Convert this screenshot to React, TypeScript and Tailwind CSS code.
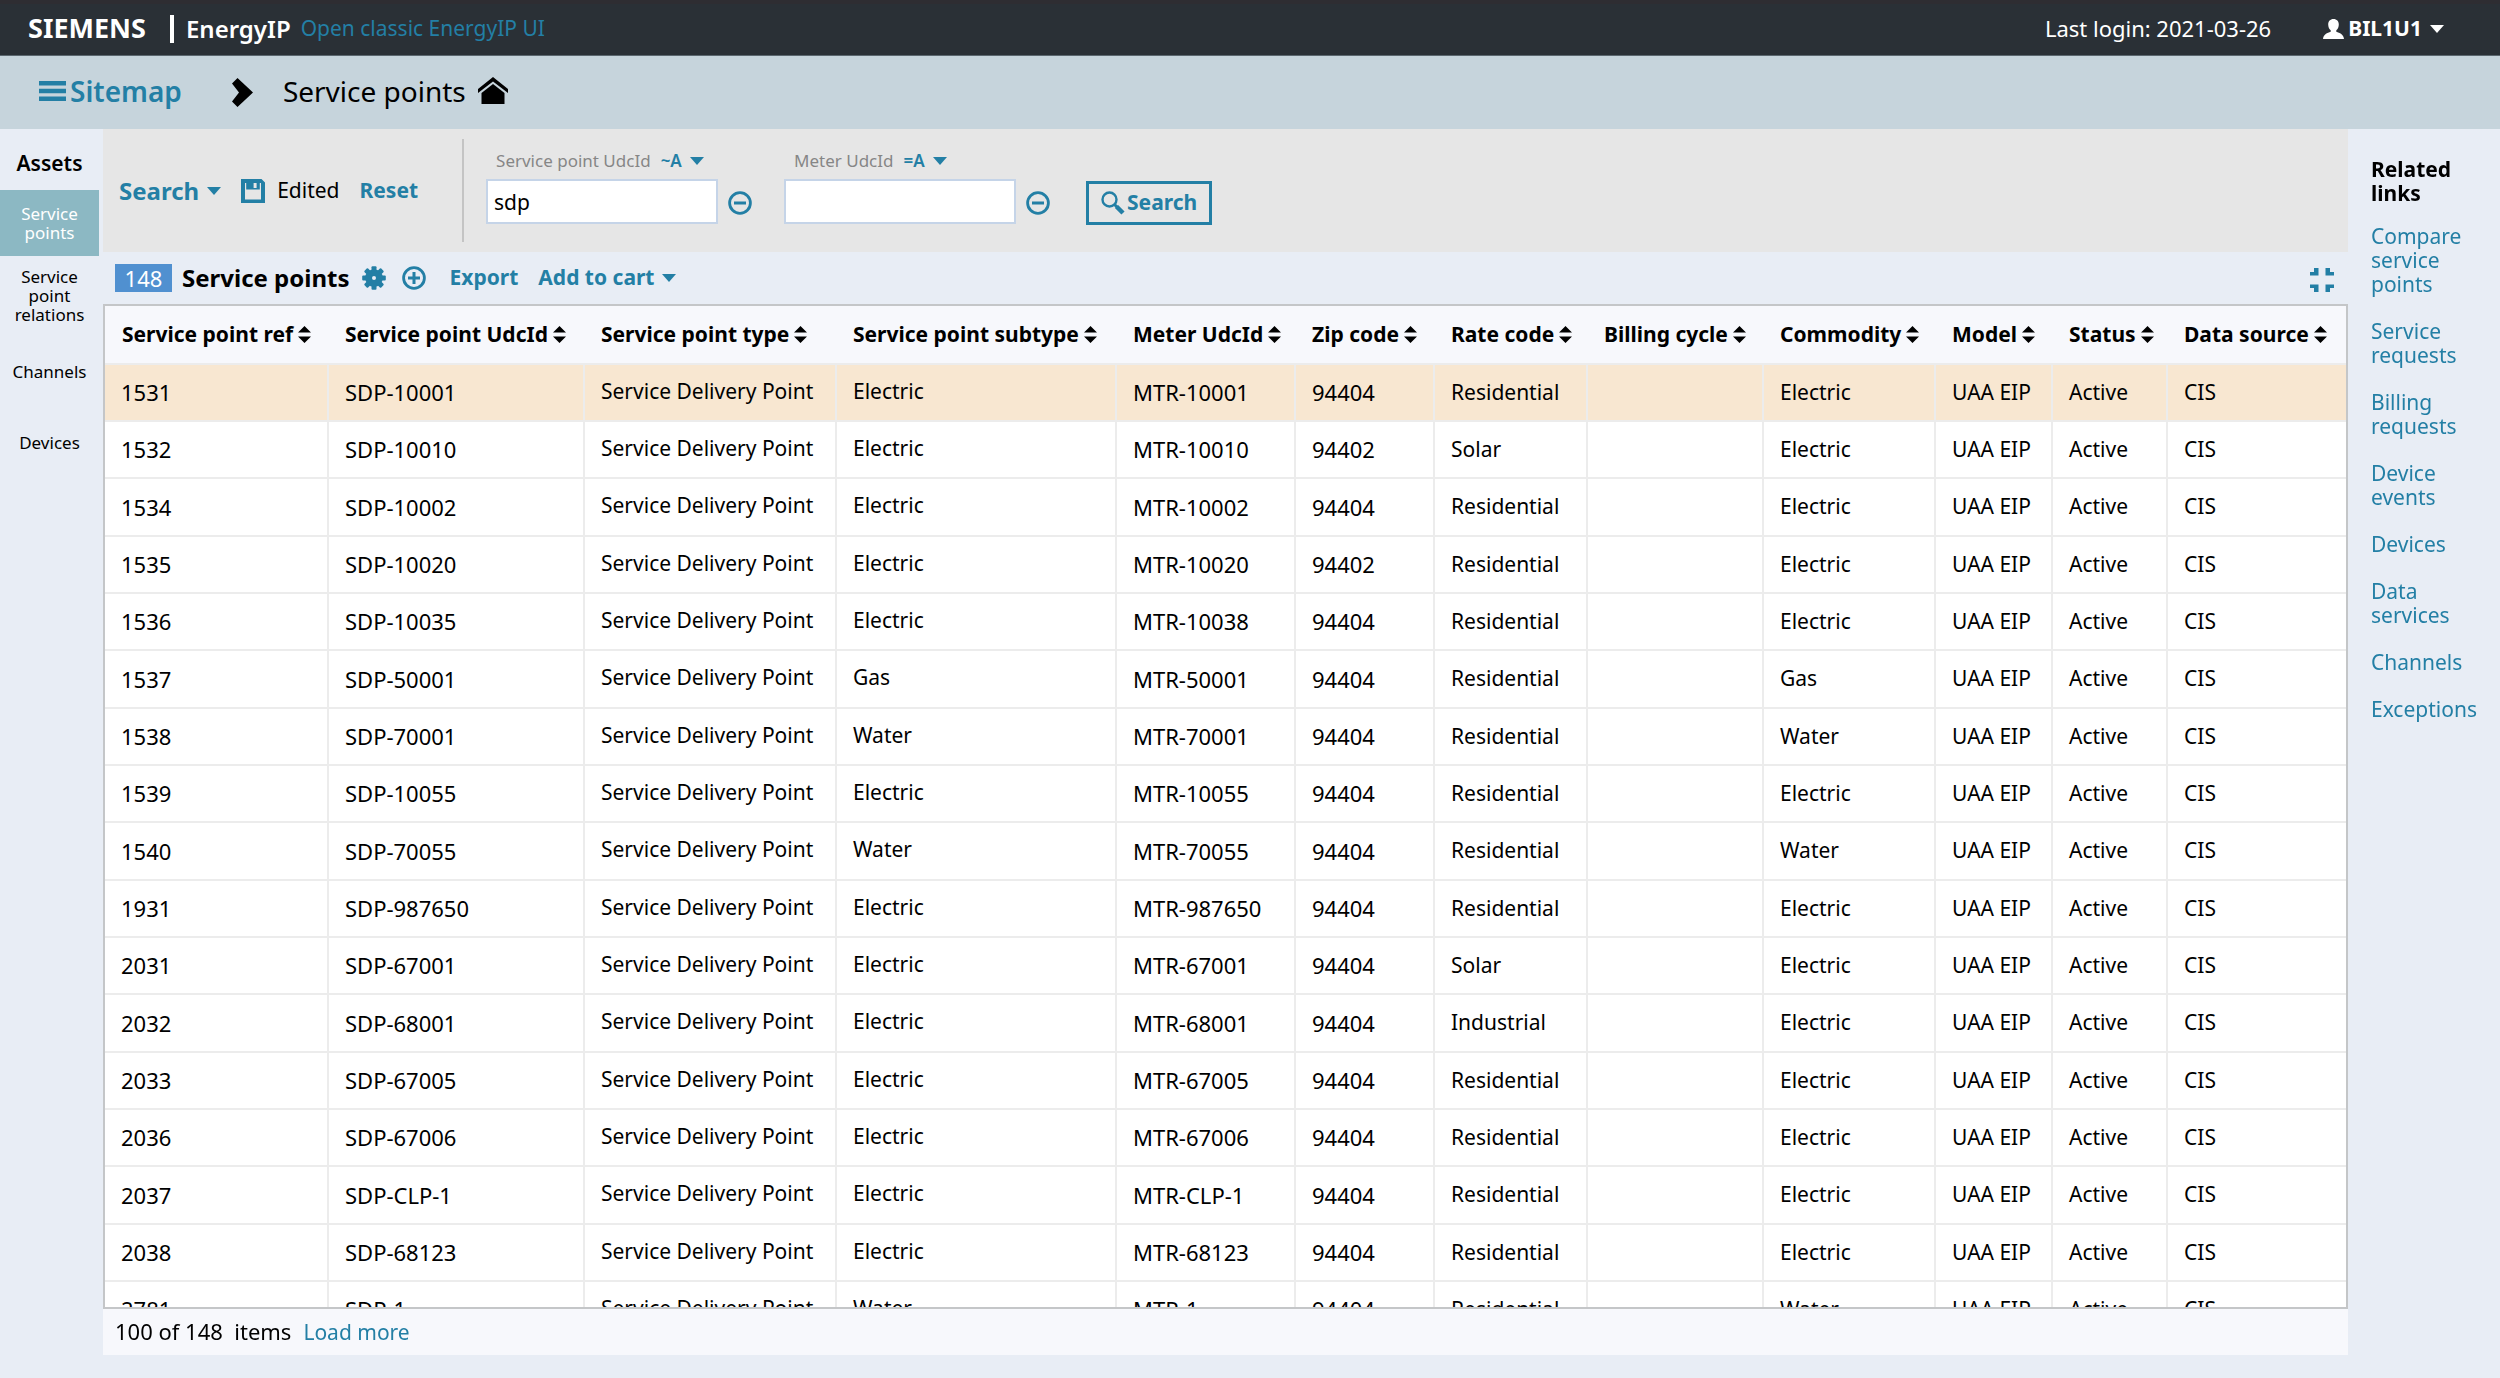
import { useState } from 'react'
import clsx from 'clsx'

const COLUMNS = [
    { key: 'ref', label: 'Service point ref', width: 'w-[223px]' },
    { key: 'udcId', label: 'Service point UdcId', width: 'w-[256px]' },
    { key: 'type', label: 'Service point type', width: 'w-[252px]' },
    { key: 'subtype', label: 'Service point subtype', width: 'w-[280px]' },
    { key: 'meter', label: 'Meter UdcId', width: 'w-[179px]' },
    { key: 'zip', label: 'Zip code', width: 'w-[139px]' },
    { key: 'rate', label: 'Rate code', width: 'w-[153px]' },
    { key: 'billing', label: 'Billing cycle', width: 'w-[176px]' },
    { key: 'commodity', label: 'Commodity', width: 'w-[172px]' },
    { key: 'model', label: 'Model', width: 'w-[117px]' },
    { key: 'status', label: 'Status', width: 'w-[115px]' },
    { key: 'source', label: 'Data source', width: '' },
]

// ref, point id, subtype / commodity, meter id, zip, rate
const POINTS = [
    ['1531', 'SDP-10001', 'Electric', 'MTR-10001', '94404', 'Residential'],
    ['1532', 'SDP-10010', 'Electric', 'MTR-10010', '94402', 'Solar'],
    ['1534', 'SDP-10002', 'Electric', 'MTR-10002', '94404', 'Residential'],
    ['1535', 'SDP-10020', 'Electric', 'MTR-10020', '94402', 'Residential'],
    ['1536', 'SDP-10035', 'Electric', 'MTR-10038', '94404', 'Residential'],
    ['1537', 'SDP-50001', 'Gas', 'MTR-50001', '94404', 'Residential'],
    ['1538', 'SDP-70001', 'Water', 'MTR-70001', '94404', 'Residential'],
    ['1539', 'SDP-10055', 'Electric', 'MTR-10055', '94404', 'Residential'],
    ['1540', 'SDP-70055', 'Water', 'MTR-70055', '94404', 'Residential'],
    ['1931', 'SDP-987650', 'Electric', 'MTR-987650', '94404', 'Residential'],
    ['2031', 'SDP-67001', 'Electric', 'MTR-67001', '94404', 'Solar'],
    ['2032', 'SDP-68001', 'Electric', 'MTR-68001', '94404', 'Industrial'],
    ['2033', 'SDP-67005', 'Electric', 'MTR-67005', '94404', 'Residential'],
    ['2036', 'SDP-67006', 'Electric', 'MTR-67006', '94404', 'Residential'],
    ['2037', 'SDP-CLP-1', 'Electric', 'MTR-CLP-1', '94404', 'Residential'],
    ['2038', 'SDP-68123', 'Electric', 'MTR-68123', '94404', 'Residential'],
    ['2781', 'SDP-1', 'Water', 'MTR-1', '94404', 'Residential'],
]

const ASSETS = ['Service points', 'Service point relations', 'Channels', 'Devices']

const RELATED = [
    'Compare service points',
    'Service requests',
    'Billing requests',
    'Device events',
    'Devices',
    'Data services',
    'Channels',
    'Exceptions',
]

function Caret() {
    return (
        <svg className="w-[14px] h-[8px] shrink-0" viewBox="0 0 14 8" fill="currentColor" aria-hidden="true">
            <path d="M0 0h14L7 8z" />
        </svg>
    )
}

function SortIcon() {
    return (
        <svg className="w-[13px] h-[17px] shrink-0" viewBox="0 0 13 17" aria-hidden="true">
            <path d="M6.500 0 13 6.500H0zM6.500 17 0 10.500h13z" fill="#000" />
        </svg>
    )
}

function SaveIcon() {
    return (
        <svg className="w-6 h-6 shrink-0" viewBox="0 0 24 24" fill="currentColor" aria-hidden="true">
            <path fillRule="evenodd" d="M0 0h20.500L24 3.500V24H0zM4 4v16.500h16V4z" />
            <path fillRule="evenodd" d="M5.200 1h13.600v9.500H5.200zM12.600 4v5h3V4z" />
        </svg>
    )
}

function GearIcon() {
    return (
        <svg className="w-6 h-6 shrink-0" viewBox="-12 -12 24 24" fill="currentColor" aria-hidden="true">
            {[0, 45, 90, 135].map((angle) => (
                <rect key={angle} x="-2.500" y="-11.800" width="5" height="23.600" rx="1" transform={`rotate(${angle})`} />
            ))}
            <circle r="8.800" />
            <circle r="2" fill="#e8edf5" />
        </svg>
    )
}

function CircleIcon({ plus = false }: { plus?: boolean }) {
    return (
        <svg className="w-6 h-6 shrink-0" viewBox="0 0 24 24" fill="none" stroke="currentColor" aria-hidden="true">
            <circle cx="12" cy="12" r="10.400" strokeWidth="2.800" />
            <path d={plus ? 'M6 12h12M12 6v12' : 'M6 12h12'} strokeWidth="3" />
        </svg>
    )
}

function TopBar() {
    return (
        <header className="flex h-[56px] items-center border-t-4 border-b border-t-[#2e2d32] border-b-[#5b676f] bg-[#2a3036] pb-[2px] pl-7 pr-14 text-[22px] text-white">
            <span className="text-[27px] font-bold">SIEMENS</span>
            <span className="ml-6 h-7 w-1 bg-white"></span>
            <span className="ml-3 text-[24px] font-semibold">EnergyIP</span>
            <a href="#classic" className="ml-[10px] text-[21px] text-[#237fa5]">Open classic EnergyIP UI</a>
            <span className="ml-auto">Last login: 2021-03-26</span>
            <button type="button" className="ml-13 flex items-center gap-1 text-[21px] font-bold">
                <svg className="w-[21px] h-5" viewBox="0 0 21 20" fill="currentColor" aria-hidden="true">
                    <path d="M10.500 0c3.300 0 5.300 2.300 5.300 5.500 0 2.600-1 4.700-2.500 5.800v1.500c3.500 1.200 7.200 2.400 7.700 7.200H0c.5-4.800 4.200-6 7.700-7.200v-1.500C6.200 10.200 5.200 8.100 5.200 5.500 5.200 2.300 7.200 0 10.500 0z" />
                </svg>
                <span className="mr-1">BIL1U1</span>
                <Caret />
            </button>
        </header>
    )
}

function Breadcrumb() {
    return (
        <nav aria-label="Breadcrumb" className="flex h-[73px] items-center bg-[#c6d4dc] pb-1 pl-[39px] text-[28px]">
            <a href="#sitemap" className="flex items-center gap-1 font-semibold text-[#237fa5]">
                <svg className="w-[27px] h-5" viewBox="0 0 27 20" fill="currentColor" aria-hidden="true">
                    <path d="M0 0h27v4.500H0zM0 7.700h27v4.500H0zM0 15.400h27v4.500H0z" />
                </svg>
                Sitemap
            </a>
            <svg className="mt-1 ml-[50px] w-[21px] h-[29px]" viewBox="0 0 21 29" aria-hidden="true">
                <path d="M5.500 0 21 14.500 5.500 29 0 23.500l7-9-7-9z" />
            </svg>
            <h1 className="ml-[30px]">Service points</h1>
            <svg className="ml-3 w-[30px] h-[27px]" viewBox="0 0 30 27" aria-hidden="true">
                <path d="M15 0 30 12v4L15 4.500 0 16v-4z" />
                <path d="M15 7 26.500 16v11h-23V16z" />
            </svg>
        </nav>
    )
}

function FilterField({ id, label, operator, value }: { id: string; label: string; operator: string; value: string }) {
    const [text, setText] = useState(value)

    return (
        <div>
            <div className="flex h-7 items-center gap-[10px] pl-[10px] text-[17px]">
                <label htmlFor={id} className="text-[#868686]">{label}</label>
                <button type="button" className="flex items-center gap-2 font-semibold text-[#237fa5]">
                    {operator} <Caret />
                </button>
            </div>
            <div className="mt-1 flex items-center gap-[10px]">
                <input
                    id={id}
                    value={text}
                    onChange={(e) => setText(e.target.value)}
                    className="h-[45px] w-[232px] border-2 border-[#c5d4e8] bg-white px-[6px] text-[21px] text-black outline-none"
                />
                <button type="button" aria-label={`Remove ${label}`} className="mt-[2px] text-[#237fa5]">
                    <CircleIcon />
                </button>
            </div>
        </div>
    )
}

function SearchPanel() {
    return (
        <section className="flex h-[123px] bg-[#e6e6e6] py-[10px] pl-4 text-[21px] text-[#237fa5]">
            <div className="flex items-center border-r-2 border-[#c4c4c4] pr-11">
                <button type="button" className="flex items-center gap-2 text-[24px] font-bold">
                    Search <Caret />
                </button>
                <button type="button" className="ml-5 flex items-center gap-3 text-black">
                    <span className="text-[#237fa5]"><SaveIcon /></span>
                    Edited
                </button>
                <button type="button" className="ml-5 font-bold">Reset</button>
            </div>
            <form className="flex items-start gap-8 pl-[22px] pt-2" onSubmit={(e) => e.preventDefault()}>
                <FilterField id="sp-udcid" label="Service point UdcId" operator="~A" value="sdp" />
                <FilterField id="meter-udcid" label="Meter UdcId" operator="=A" value="" />
                <button type="submit" className="mt-[34px] ml-1 flex h-[44px] items-center gap-[2px] border-3 border-[#237fa5] px-3 font-bold">
                    <svg className="w-6 h-6" viewBox="0 0 24 24" fill="none" stroke="currentColor" aria-hidden="true">
                        <circle cx="8.500" cy="8.500" r="7" strokeWidth="2.400" />
                        <path d="m13.500 13.500 3 3" strokeWidth="3" />
                        <path d="m15.500 15.500 6.500 6.500" strokeWidth="4.500" />
                    </svg>
                    Search
                </button>
            </form>
        </section>
    )
}

function Toolbar() {
    return (
        <div className="flex h-[52px] items-center pl-3 pr-[14px] text-[21px] font-bold text-[#237fa5]">
            <span className="flex h-7 w-[57px] items-center justify-center bg-[#5090d0] text-[22px] font-normal text-white">148</span>
            <h2 className="ml-[10px] text-[24px] text-black">Service points</h2>
            <button type="button" aria-label="Settings" className="ml-3"><GearIcon /></button>
            <button type="button" aria-label="Add" className="ml-4"><CircleIcon plus /></button>
            <button type="button" className="ml-6">Export</button>
            <button type="button" className="ml-5 flex items-center gap-2">Add to cart <Caret /></button>
            <button type="button" aria-label="Collapse" className="mt-1 ml-auto">
                <svg className="w-6 h-6" viewBox="0 0 24 24" fill="currentColor" aria-hidden="true">
                    <path d="M4 0h4.500v7.500H0V4h4zM15.500 0H20v4h4v3.500h-8.500zM0 16.500h8.500V24H4v-4H0zM15.500 16.500H24V20h-4v4h-4.500z" />
                </svg>
            </button>
        </div>
    )
}

function PointsTable() {
    const [selected, setSelected] = useState('1531')

    return (
        <div className="min-h-0 flex-1 overflow-y-auto border-2 border-[#c4c6c8] bg-white [scrollbar-width:none]">
            <table className="w-full table-fixed border-collapse text-left text-[22px] whitespace-nowrap">
                <thead className="bg-[#f7f8fc]">
                    <tr className="h-[58px]">
                        {COLUMNS.map((col) => (
                            <th key={col.key} scope="col" className={clsx('pl-[17px] text-[21px] font-bold', col.width)}>
                                <button type="button" className="flex items-center gap-[5px]">
                                    {col.label} <SortIcon />
                                </button>
                            </th>
                        ))}
                    </tr>
                </thead>
                <tbody>
                    {POINTS.map(([ref, udcId, kind, meter, zip, rate]) => (
                        <tr
                            key={ref}
                            onClick={() => setSelected(ref)}
                            className={clsx(
                                'h-[57px] nth-[3n]:h-[58px] border-y-2 border-[#ececec] divide-x-2 divide-[#ececec]',
                                selected === ref && 'bg-[#f8e7d1]'
                            )}
                        >
                            <td className="pl-4">{ref}</td>
                            <td className="pl-4">{udcId}</td>
                            <td className="pl-4 pb-[2px] text-[21px]">Service Delivery Point</td>
                            <td className="pl-4 pb-[2px] text-[21px]">{kind}</td>
                            <td className="pl-4">{meter}</td>
                            <td className="pl-4">{zip}</td>
                            <td className="pl-4 text-[21px]">{rate}</td>
                            <td className="pl-4"></td>
                            <td className="pl-4 text-[21px]">{kind}</td>
                            <td className="pl-4 text-[21px]">UAA EIP</td>
                            <td className="pl-4 text-[21px]">Active</td>
                            <td className="pl-4 text-[21px]">CIS</td>
                        </tr>
                    ))}
                </tbody>
            </table>
        </div>
    )
}

export default function App() {
    return (
        <div className="flex h-screen flex-col overflow-hidden bg-[#e8edf5] font-['Noto_Sans',sans-serif] text-black">
            <TopBar />
            <Breadcrumb />
            <div className="flex min-h-0 flex-1">
                <aside className="w-[99px] shrink-0 text-center">
                    <h2 className="flex h-[61px] items-center justify-center pt-2 text-[21px] font-semibold">Assets</h2>
                    <nav aria-label="Assets" className="text-[17px] leading-[19px]">
                        {ASSETS.map((item, i) => (
                            <a
                                key={item}
                                href="#assets"
                                className={clsx(
                                    'flex items-center justify-center px-3 pt-[11px] pb-3',
                                    i === 0 ? 'h-[66px] bg-[#8cb8c3] text-white' : 'min-h-[71px]'
                                )}
                            >
                                {item}
                            </a>
                        ))}
                    </nav>
                </aside>
                <main className="ml-1 flex min-w-0 flex-1 flex-col pb-[23px]">
                    <SearchPanel />
                    <Toolbar />
                    <PointsTable />
                    <footer className="flex h-[46px] items-baseline gap-3 bg-[#f7f8fc] pt-1.5 pl-3 text-[22px]">
                        <span className="whitespace-pre">100 of 148  items</span>
                        <button type="button" className="text-[21px] text-[#237fa5]">Load more</button>
                    </footer>
                </main>
                <aside className="w-[152px] shrink-0 pl-[23px] pt-7 text-[21px] leading-6">
                    <h2 className="w-20 font-bold">Related links</h2>
                    <nav aria-label="Related links" className="mt-[19px] flex flex-col gap-[23px] pr-6 text-[#237fa5]">
                        {RELATED.map((link) => (
                            <a key={link} href="#related">{link}</a>
                        ))}
                    </nav>
                </aside>
            </div>
        </div>
    )
}
